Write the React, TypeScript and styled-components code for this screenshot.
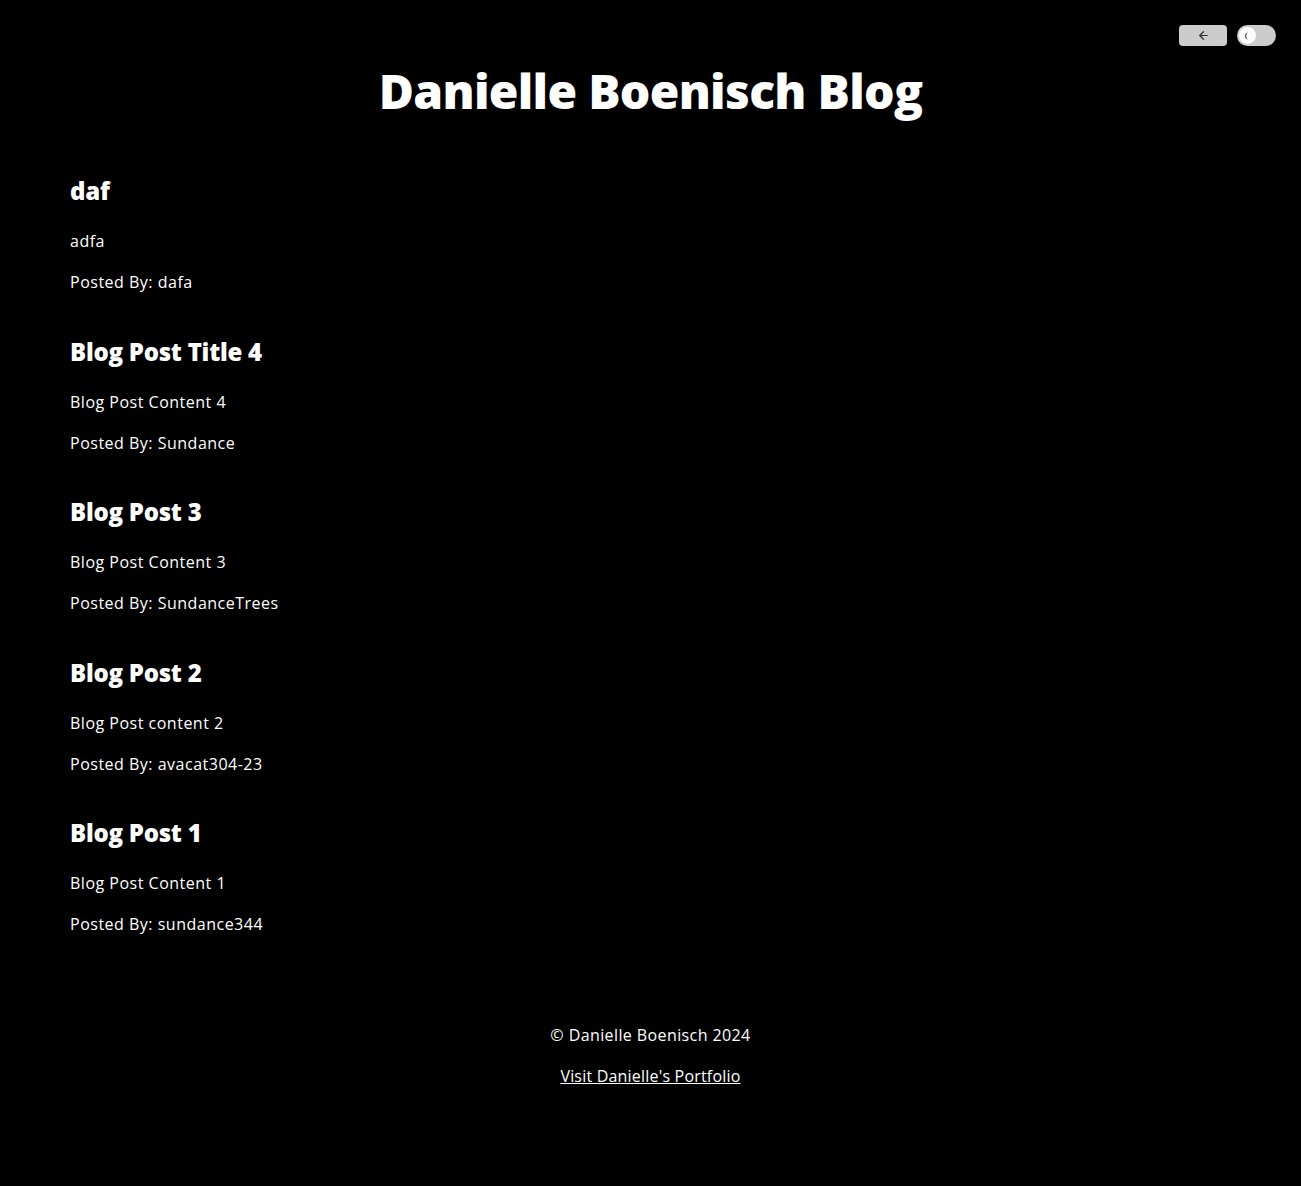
import React from "react";
import styled, { createGlobalStyle } from "styled-components";

const Global = createGlobalStyle`
  html, body { margin: 0; padding: 0; background: #000; }
  body { font-family: "Open Sans", "Noto Sans", sans-serif; color: #fff; }
`;

const Page = styled.div`
  min-height: 1186px;
  background: #000;
  display: flex;
  flex-direction: column;
`;

const TopBar = styled.div`
  display: flex;
  justify-content: flex-end;
  gap: 10px;
  padding: 25px 25px 0 0;
  height: 21px;
`;

const BackButton = styled.button`
  width: 48px;
  height: 21px;
  border: none;
  border-radius: 4px;
  background: #cccccc;
  display: flex;
  align-items: center;
  justify-content: center;
  padding: 0;
  cursor: pointer;
`;

const Toggle = styled.button`
  width: 39px;
  height: 21px;
  border: none;
  border-radius: 11px;
  background: #cccccc;
  padding: 0 0 0 2px;
  display: flex;
  align-items: center;
  cursor: pointer;
`;

const Knob = styled.span`
  width: 17px;
  height: 17px;
  border-radius: 50%;
  background: #fff;
  display: flex;
  align-items: center;
  justify-content: center;
`;

const Title = styled.h1`
  margin: 16px 0 0;
  text-align: center;
  font-size: 48px;
  line-height: 58px;
  font-weight: 800;
  letter-spacing: -0.7px;
`;

const Posts = styled.main`
  display: flex;
  flex-direction: column;
  gap: 39.5px;
  padding: 53px 70px 0;
`;

const Post = styled.article`
  display: flex;
  flex-direction: column;
`;

const PostTitle = styled.h2`
  margin: 0 0 20px;
  font-size: 24px;
  line-height: 36px;
  font-weight: 800;
  letter-spacing: -0.25px;
`;

const Text = styled.p`
  margin: 0;
  font-size: 16px;
  line-height: 24px;
  letter-spacing: 0.5px;
  & + & { margin-top: 17px; }
`;

const Footer = styled.footer`
  padding-top: 87px;
  display: flex;
  flex-direction: column;
  align-items: center;
  gap: 17px;
  font-size: 16px;
  line-height: 24px;
  letter-spacing: 0.4px;
`;

const Link = styled.a`
  color: #fff;
  text-decoration: underline;
  letter-spacing: 0.2px;
`;

const posts = [
  { title: "daf", content: "adfa", by: "dafa" },
  { title: "Blog Post Title 4", content: "Blog Post Content 4", by: "Sundance" },
  { title: "Blog Post 3", content: "Blog Post Content 3", by: "SundanceTrees" },
  { title: "Blog Post 2", content: "Blog Post content 2", by: "avacat304-23" },
  { title: "Blog Post 1", content: "Blog Post Content 1", by: "sundance344" },
];

export default function App() {
  return (
    <Page>
      <Global />
      <TopBar>
        <BackButton aria-label="Back">
          <svg width="13" height="13" viewBox="0 0 24 24" fill="none" stroke="#333" strokeWidth="2.3" strokeLinecap="round" strokeLinejoin="round">
            <path d="M19 12H5" />
            <path d="M12 19l-7-7 7-7" />
          </svg>
        </BackButton>
        <Toggle aria-label="Toggle theme">
          <Knob>
            <svg width="10" height="10" viewBox="0 0 24 24" fill="#444">
              <path d="M14 3A9 9 0 0 0 14 21A6 9 0 0 1 14 3Z" />
            </svg>
          </Knob>
        </Toggle>
      </TopBar>
      <Title>Danielle Boenisch Blog</Title>
      <Posts>
        {posts.map((p) => (
          <Post key={p.title}>
            <PostTitle>{p.title}</PostTitle>
            <Text>{p.content}</Text>
            <Text>Posted By: {p.by}</Text>
          </Post>
        ))}
      </Posts>
      <Footer>
        <div>© Danielle Boenisch 2024</div>
        <Link href="#">Visit Danielle's Portfolio</Link>
      </Footer>
    </Page>
  );
}
